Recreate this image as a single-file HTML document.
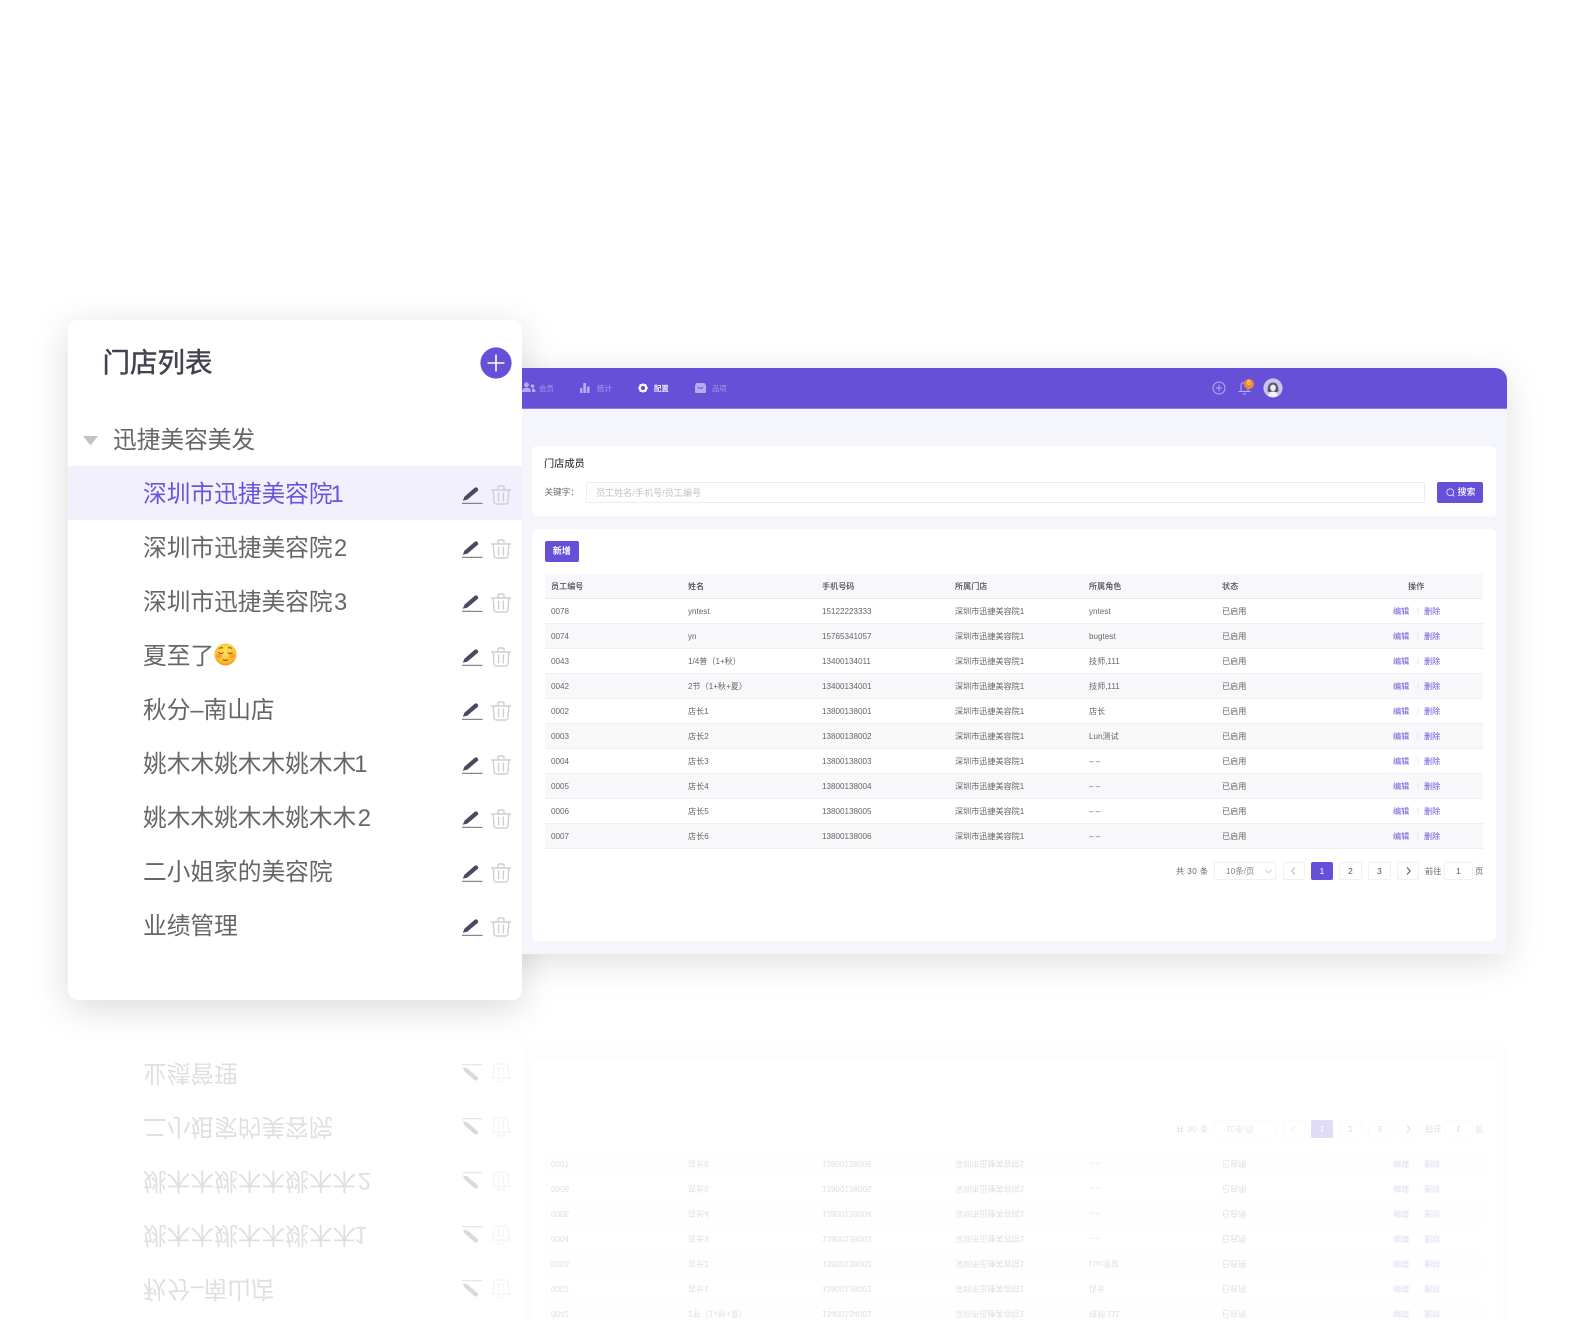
<!DOCTYPE html>
<html lang="zh-CN"><head><meta charset="utf-8"><title>门店列表</title>
<style>
*{box-sizing:border-box;margin:0;padding:0}
html,body{width:1576px;height:1320px;overflow:hidden;background:#fff}
body{position:relative;font-family:"Liberation Sans","Noto Sans CJK SC",sans-serif;color:#666}
.layer{position:absolute;left:0;top:0;width:1576px;height:1000px;filter:blur(.3px)}
.mirror{transform-origin:0 1000px;transform:scaleY(-1);opacity:.2}
.a{position:absolute;white-space:nowrap}
.pshadow{position:absolute;left:68px;top:320px;width:454px;height:680px;border-radius:10px;box-shadow:0 8px 36px rgba(0,0,0,.15)}
.app{position:absolute;left:500px;top:368px;width:1007px;height:586px;background:#f5f6fb;border-radius:0 12px 4px 0;box-shadow:0 8px 36px rgba(0,0,0,.13)}
.mirror .app{box-shadow:none}
.hdr{position:absolute;left:522px;top:368px;width:985px;height:41px;background:#6750d8;border-radius:0 12px 0 0;border-bottom:1px solid #8e7ee4}
.card{position:absolute;background:#fff;border-radius:5px;left:532px;width:964px}
.nav{position:absolute;top:383.5px;font-size:7.4px;line-height:10px;color:#a89cea}
.f{font-size:8.6px;line-height:12px;color:#666}
.box{position:absolute;background:#fff;border:1px solid #f0f0f4;border-radius:2px;text-align:center;font-size:8.4px;color:#555}
.btn{position:absolute;background:#6750d8;border-radius:2px;color:#fff;text-align:center;font-size:8.4px;font-weight:500}
.r{position:absolute;left:544.5px;width:938.5px;height:25.1px;border-bottom:1px solid #eeeef3;font-size:8.1px;line-height:25px;color:#666}
.r.s{background:#f8f8fb}
.mirror .r{border-color:#f6f6f9}
.mirror .r.s{background:#fbfbfd}
.r span{position:absolute;top:0;white-space:nowrap}
.c1{left:6.5px}.c2{left:143.5px}.c3{left:277.5px}.c4{left:410.5px}.c5{left:544.5px}.c6{left:677.5px}
.e{left:848.5px;color:#6a54dc}.x{left:872.5px;color:#d9d9e2;font-size:7px}.d{left:879.5px;color:#6a54dc}
.panel{position:absolute;left:68px;top:320px;width:454px;height:680px;background:#fff;border-radius:10px}
.it{position:absolute;left:143px;font-size:23.7px;line-height:34px;margin-top:1px;color:#666;white-space:nowrap}
.mirror .it{margin-top:2px}
.n1{margin-left:-2px}.n2{margin-left:1.5px}
.ic{position:absolute}
.pen{left:462px}
.tr{left:491px}
</style></head><body>
<svg width="0" height="0" style="position:absolute"><defs>
<g id="pen"><path d="M.8 13.8 L2.4 9.8 L12.4 1 Q14 -.2 15.5 1.1 Q16.8 2.6 15.6 4 L5.4 12.6 Z" fill="#484b5f"/><rect x="0" y="15.8" width="20.5" height="1" fill="#6a6a70"/></g>
<g id="trash" fill="none" stroke="#cfcfd2" stroke-width="1.4"><path d="M0 5H20"/><path d="M7 4.5V2.2Q7 1 8.2 1H11.8Q13 1 13 2.2V4.5"/><path d="M2.2 5.2L3 16.5Q3.2 19 5.6 19H14.4Q16.8 19 17 16.5L17.8 5.2"/><path d="M7.6 7.5V16.5M12.4 7.5V16.5"/></g>
</defs></svg>

<!-- reflection -->
<div class="layer mirror">
<div class="app"></div>
<div class="card" style="top:528px;height:413px"></div>
<div class="r" style="top:648.7px"><span class="c1">0043</span><span class="c2">1/4普（1+秋）</span><span class="c3">13400134011</span><span class="c4">深圳市迅捷美容院1</span><span class="c5">技师,111</span><span class="c6">已启用</span><span class="e">编辑</span><span class="x">|</span><span class="d">删除</span></div>
<div class="r s" style="top:673.8px"><span class="c1">0042</span><span class="c2">2节（1+秋+夏）</span><span class="c3">13400134001</span><span class="c4">深圳市迅捷美容院1</span><span class="c5">技师,111</span><span class="c6">已启用</span><span class="e">编辑</span><span class="x">|</span><span class="d">删除</span></div>
<div class="r" style="top:698.9px"><span class="c1">0002</span><span class="c2">店长1</span><span class="c3">13800138001</span><span class="c4">深圳市迅捷美容院1</span><span class="c5">店长</span><span class="c6">已启用</span><span class="e">编辑</span><span class="x">|</span><span class="d">删除</span></div>
<div class="r s" style="top:724px"><span class="c1">0003</span><span class="c2">店长2</span><span class="c3">13800138002</span><span class="c4">深圳市迅捷美容院1</span><span class="c5">Lun测试</span><span class="c6">已启用</span><span class="e">编辑</span><span class="x">|</span><span class="d">删除</span></div>
<div class="r" style="top:749.1px"><span class="c1">0004</span><span class="c2">店长3</span><span class="c3">13800138003</span><span class="c4">深圳市迅捷美容院1</span><span class="c5">– –</span><span class="c6">已启用</span><span class="e">编辑</span><span class="x">|</span><span class="d">删除</span></div>
<div class="r s" style="top:774.2px"><span class="c1">0005</span><span class="c2">店长4</span><span class="c3">13800138004</span><span class="c4">深圳市迅捷美容院1</span><span class="c5">– –</span><span class="c6">已启用</span><span class="e">编辑</span><span class="x">|</span><span class="d">删除</span></div>
<div class="r" style="top:799.3px"><span class="c1">0006</span><span class="c2">店长5</span><span class="c3">13800138005</span><span class="c4">深圳市迅捷美容院1</span><span class="c5">– –</span><span class="c6">已启用</span><span class="e">编辑</span><span class="x">|</span><span class="d">删除</span></div>
<div class="r s" style="top:824.4px"><span class="c1">0007</span><span class="c2">店长6</span><span class="c3">13800138006</span><span class="c4">深圳市迅捷美容院1</span><span class="c5">– –</span><span class="c6">已启用</span><span class="e">编辑</span><span class="x">|</span><span class="d">删除</span></div>
<div class="a f" style="left:1176px;top:865.5px;font-size:8.2px;letter-spacing:.4px">共 30 条</div>
<div class="box" style="left:1214px;top:862px;width:62px;height:18px;line-height:17px;text-align:left;padding-left:11px;color:#888">10条/页</div>
<div class="box" style="left:1283px;top:862px;width:22px;height:18px"></div>
<svg class="ic" style="left:1291px;top:867px" width="5" height="8" fill="none" stroke="#bbb" stroke-width="1"><path d="M4 .5L.8 4L4 7.5"/></svg>
<div class="btn" style="left:1311px;top:862px;width:22px;height:18px;line-height:18px">1</div>
<div class="box" style="left:1339px;top:862px;width:23px;height:18px;line-height:17px">2</div>
<div class="box" style="left:1368px;top:862px;width:23px;height:18px;line-height:17px">3</div>
<div class="box" style="left:1397px;top:862px;width:22px;height:18px"></div>
<svg class="ic" style="left:1406px;top:867px" width="5" height="8" fill="none" stroke="#555" stroke-width="1"><path d="M1 .5L4.2 4L1 7.5"/></svg>
<div class="a f" style="left:1425px;top:865.5px;font-size:8.2px">前往</div>
<div class="box" style="left:1444px;top:862px;width:29px;height:18px;line-height:17px">1</div>
<div class="a f" style="left:1475px;top:865.5px;font-size:8.2px">页</div>
<div class="panel"></div>
<div class="it" style="top:693px">秋分–南山店</div>
<div class="it" style="top:747px">姚木木姚木木姚木木<span class="n1">1</span></div>
<div class="it" style="top:801px">姚木木姚木木姚木木<span class="n2">2</span></div>
<div class="it" style="top:855px">二小姐家的美容院</div>
<div class="it" style="top:909px">业绩管理</div>
<svg class="ic pen" style="top:703px" width="21" height="18"><use href="#pen"/></svg><svg class="ic tr" style="top:701px" width="20" height="20"><use href="#trash"/></svg>
<svg class="ic pen" style="top:757px" width="21" height="18"><use href="#pen"/></svg><svg class="ic tr" style="top:755px" width="20" height="20"><use href="#trash"/></svg>
<svg class="ic pen" style="top:811px" width="21" height="18"><use href="#pen"/></svg><svg class="ic tr" style="top:809px" width="20" height="20"><use href="#trash"/></svg>
<svg class="ic pen" style="top:865px" width="21" height="18"><use href="#pen"/></svg><svg class="ic tr" style="top:863px" width="20" height="20"><use href="#trash"/></svg>
<svg class="ic pen" style="top:919px" width="21" height="18"><use href="#pen"/></svg><svg class="ic tr" style="top:917px" width="20" height="20"><use href="#trash"/></svg>
</div>

<!-- main -->
<div class="layer">
<div class="pshadow"></div>
<div class="app"></div>
<div class="hdr"></div>

<svg class="ic" style="left:522px;top:382px" width="14" height="11" fill="#b5abee"><circle cx="4.5" cy="2.8" r="2.4"/><path d="M0 10Q0 5.8 4.5 5.8T9 10Z"/><circle cx="10.5" cy="4" r="1.8"/><path d="M10 6.4Q13.5 6.2 13.5 10H10Z"/></svg>
<div class="nav" style="left:539px">会员</div>
<svg class="ic" style="left:580px;top:383px" width="10" height="10" fill="#b5abee"><rect x="0" y="5" width="2.4" height="5"/><rect x="3.3" y="0" width="2.8" height="10"/><rect x="7" y="3.5" width="2.6" height="6.5"/></svg>
<div class="nav" style="left:597px">统计</div>
<svg class="ic" style="left:638px;top:383px" width="10" height="10"><path d="M5 0L6.2 1.3L8.2 1L8.7 3L10 5L8.7 7L8.2 9L6.2 8.7L5 10L3.8 8.7L1.8 9L1.3 7L0 5L1.3 3L1.8 1L3.8 1.3Z" fill="#fff"/><circle cx="5" cy="5" r="2.2" fill="#6750d8"/></svg>
<div class="nav" style="left:654px;color:#efecfc;font-weight:700">配置</div>
<svg class="ic" style="left:695px;top:383px" width="11" height="10"><path d="M1.5 0H9.5L11 2.5V9Q11 10 10 10H1Q0 10 0 9V2.5Z" fill="#b5abee"/><path d="M3 4Q5.5 7 8 4" fill="none" stroke="#6750d8" stroke-width="1"/></svg>
<div class="nav" style="left:712px">品项</div>

<svg class="ic" style="left:1212px;top:381px" width="14" height="14" fill="none" stroke="#b9afef" stroke-width="1"><circle cx="7" cy="7" r="6"/><path d="M7 3.8V10.2M3.8 7H10.2"/></svg>
<svg class="ic" style="left:1238px;top:381px" width="14" height="14" fill="none" stroke="#b9afef" stroke-width="1"><path d="M3 10V5.5Q3 1.5 6.5 1.5T10 5.5V10"/><path d="M.5 10.5H12.5M5 13H8"/></svg>
<div class="a" style="left:1244px;top:379px;width:10px;height:10px;border-radius:50%;background:#f5862b;color:#ffe3c6;font-size:7px;line-height:10px;text-align:center">6</div>
<svg class="ic" style="left:1263px;top:378px" width="20" height="20"><circle cx="10" cy="10" r="9.6" fill="#c9c3ef"/><path d="M4.5 13Q4.5 4.5 10 4.5T15.5 13Q14.5 14.5 13 14H7Q5.5 14.5 4.5 13Z" fill="#5c5a72"/><ellipse cx="10" cy="9.8" rx="2.8" ry="3.2" fill="#f4e9e6"/><path d="M5 17.5Q6.5 13.5 10 13.5T15 17.5Q10 20.5 5 17.5Z" fill="#f6f4fb"/></svg>

<div class="card" style="top:446px;height:70px"></div>
<div class="a" style="left:544px;top:457.8px;font-size:10.2px;line-height:14px;color:#3f3f4a;font-weight:500">门店成员</div>
<div class="a f" style="left:544.5px;top:486px">关键字：</div>
<div class="a" style="left:586px;top:482px;width:839px;height:21px;border:1px solid #ececf2;border-radius:2px;background:#fff"></div>
<div class="a f" style="left:596px;top:486.5px;color:#c2c2ca;font-size:9.1px">员工姓名/手机号/员工编号</div>
<div class="btn" style="left:1437px;top:482px;width:46px;height:21px;line-height:21px;padding-left:13px;font-size:9px">搜索</div>
<svg class="ic" style="left:1446px;top:488px" width="9" height="9" fill="none" stroke="#e7e3fa" stroke-width=".9"><circle cx="4.2" cy="4.2" r="3.4"/><path d="M6.7 6.7L8.4 8.4"/></svg>

<div class="card" style="top:528.5px;height:412.5px"></div>
<div class="btn" style="left:544.5px;top:541px;width:34.5px;height:21px;line-height:21px;font-size:9px;font-weight:700">新增</div>

<div class="r" style="top:574px;height:24.5px;background:#f8f8fb;border-bottom:1px solid #e9e9f0;font-weight:500;color:#4a4a55"><span class="c1">员工编号</span><span class="c2">姓名</span><span class="c3">手机号码</span><span class="c4">所属门店</span><span class="c5">所属角色</span><span class="c6">状态</span><span style="left:863.5px">操作</span></div>
<div class="r" style="top:598.5px"><span class="c1">0078</span><span class="c2">yntest</span><span class="c3">15122223333</span><span class="c4">深圳市迅捷美容院1</span><span class="c5">yntest</span><span class="c6">已启用</span><span class="e">编辑</span><span class="x">|</span><span class="d">删除</span></div>
<div class="r s" style="top:623.6px"><span class="c1">0074</span><span class="c2">yn</span><span class="c3">15765341057</span><span class="c4">深圳市迅捷美容院1</span><span class="c5">bugtest</span><span class="c6">已启用</span><span class="e">编辑</span><span class="x">|</span><span class="d">删除</span></div>
<div class="r" style="top:648.7px"><span class="c1">0043</span><span class="c2">1/4普（1+秋）</span><span class="c3">13400134011</span><span class="c4">深圳市迅捷美容院1</span><span class="c5">技师,111</span><span class="c6">已启用</span><span class="e">编辑</span><span class="x">|</span><span class="d">删除</span></div>
<div class="r s" style="top:673.8px"><span class="c1">0042</span><span class="c2">2节（1+秋+夏）</span><span class="c3">13400134001</span><span class="c4">深圳市迅捷美容院1</span><span class="c5">技师,111</span><span class="c6">已启用</span><span class="e">编辑</span><span class="x">|</span><span class="d">删除</span></div>
<div class="r" style="top:698.9px"><span class="c1">0002</span><span class="c2">店长1</span><span class="c3">13800138001</span><span class="c4">深圳市迅捷美容院1</span><span class="c5">店长</span><span class="c6">已启用</span><span class="e">编辑</span><span class="x">|</span><span class="d">删除</span></div>
<div class="r s" style="top:724px"><span class="c1">0003</span><span class="c2">店长2</span><span class="c3">13800138002</span><span class="c4">深圳市迅捷美容院1</span><span class="c5">Lun测试</span><span class="c6">已启用</span><span class="e">编辑</span><span class="x">|</span><span class="d">删除</span></div>
<div class="r" style="top:749.1px"><span class="c1">0004</span><span class="c2">店长3</span><span class="c3">13800138003</span><span class="c4">深圳市迅捷美容院1</span><span class="c5">– –</span><span class="c6">已启用</span><span class="e">编辑</span><span class="x">|</span><span class="d">删除</span></div>
<div class="r s" style="top:774.2px"><span class="c1">0005</span><span class="c2">店长4</span><span class="c3">13800138004</span><span class="c4">深圳市迅捷美容院1</span><span class="c5">– –</span><span class="c6">已启用</span><span class="e">编辑</span><span class="x">|</span><span class="d">删除</span></div>
<div class="r" style="top:799.3px"><span class="c1">0006</span><span class="c2">店长5</span><span class="c3">13800138005</span><span class="c4">深圳市迅捷美容院1</span><span class="c5">– –</span><span class="c6">已启用</span><span class="e">编辑</span><span class="x">|</span><span class="d">删除</span></div>
<div class="r s" style="top:824.4px"><span class="c1">0007</span><span class="c2">店长6</span><span class="c3">13800138006</span><span class="c4">深圳市迅捷美容院1</span><span class="c5">– –</span><span class="c6">已启用</span><span class="e">编辑</span><span class="x">|</span><span class="d">删除</span></div>

<div class="a f" style="left:1176px;top:865.5px;font-size:8.2px;letter-spacing:.4px">共 30 条</div>
<div class="box" style="left:1214px;top:862px;width:62px;height:18px;line-height:17px;text-align:left;padding-left:11px;color:#888">10条/页</div>
<svg class="ic" style="left:1265px;top:869px" width="7" height="5" fill="none" stroke="#c8c8cf" stroke-width=".8"><path d="M.5 .8L3.5 3.8L6.5 .8"/></svg>
<div class="box" style="left:1283px;top:862px;width:22px;height:18px"></div>
<svg class="ic" style="left:1291px;top:867px" width="5" height="8" fill="none" stroke="#bbb" stroke-width="1"><path d="M4 .5L.8 4L4 7.5"/></svg>
<div class="btn" style="left:1311px;top:862px;width:22px;height:18px;line-height:18px">1</div>
<div class="box" style="left:1339px;top:862px;width:23px;height:18px;line-height:17px">2</div>
<div class="box" style="left:1368px;top:862px;width:23px;height:18px;line-height:17px">3</div>
<div class="box" style="left:1397px;top:862px;width:22px;height:18px"></div>
<svg class="ic" style="left:1406px;top:867px" width="5" height="8" fill="none" stroke="#555" stroke-width="1"><path d="M1 .5L4.2 4L1 7.5"/></svg>
<div class="a f" style="left:1425px;top:865.5px;font-size:8.2px">前往</div>
<div class="box" style="left:1444px;top:862px;width:29px;height:18px;line-height:17px">1</div>
<div class="a f" style="left:1475px;top:865.5px;font-size:8.2px">页</div>

<div class="panel"></div>
<div class="a" style="left:102.5px;top:343px;font-size:27.5px;line-height:40px;font-weight:400;-webkit-text-stroke:.45px #41414f;color:#41414f">门店列表</div>
<svg class="ic" style="left:480px;top:347px" width="32" height="32"><circle cx="16" cy="16" r="15.6" fill="#6750d8"/><path d="M16 7.5V24.5M7.5 16H24.5" stroke="#fff" stroke-width="1.6"/></svg>
<svg class="ic" style="left:83px;top:435.5px" width="15" height="10"><path d="M0 0H15L7.5 9.5Z" fill="#c4c4c6"/></svg>
<div class="a" style="left:113px;top:423.5px;font-size:23.7px;line-height:34px;color:#666">迅捷美容美发</div>
<div class="a" style="left:68px;top:466px;width:454px;height:54px;background:#f2f0fc"></div>

<div class="it" style="top:477px;color:#6a54dc">深圳市迅捷美容院<span class="n1">1</span></div>
<div class="it" style="top:531px">深圳市迅捷美容院<span class="n2">2</span></div>
<div class="it" style="top:585px">深圳市迅捷美容院<span class="n2">3</span></div>
<div class="it" style="top:639px">夏至了</div>
<svg class="ic" style="left:214px;top:642.5px" width="23" height="23"><defs><radialGradient id="em" cx=".5" cy=".35" r=".7"><stop offset="0" stop-color="#ffe45a"/><stop offset=".7" stop-color="#fcbc2c"/><stop offset="1" stop-color="#f08a1c"/></radialGradient></defs><circle cx="11.5" cy="11.5" r="11" fill="url(#em)"/><ellipse cx="5" cy="13" rx="3" ry="2" fill="#f7823c" opacity=".6"/><ellipse cx="18" cy="13" rx="3" ry="2" fill="#f7823c" opacity=".6"/><path d="M4.5 9.5Q7 11.5 9.5 9.5M13.5 9.5Q16 11.5 18.5 9.5M5 5.5Q7 4.3 9 5M14 5Q16 4.3 18 5.5M9 16.5Q11.5 18.5 14 16.5" fill="none" stroke="#8a4b12" stroke-width="1"/></svg>
<div class="it" style="top:693px">秋分–南山店</div>
<div class="it" style="top:747px">姚木木姚木木姚木木<span class="n1">1</span></div>
<div class="it" style="top:801px">姚木木姚木木姚木木<span class="n2">2</span></div>
<div class="it" style="top:855px">二小姐家的美容院</div>
<div class="it" style="top:909px">业绩管理</div>

<svg class="ic pen" style="top:487px" width="21" height="18"><use href="#pen"/></svg><svg class="ic tr" style="top:485px" width="20" height="20"><use href="#trash"/></svg>
<svg class="ic pen" style="top:541px" width="21" height="18"><use href="#pen"/></svg><svg class="ic tr" style="top:539px" width="20" height="20"><use href="#trash"/></svg>
<svg class="ic pen" style="top:595px" width="21" height="18"><use href="#pen"/></svg><svg class="ic tr" style="top:593px" width="20" height="20"><use href="#trash"/></svg>
<svg class="ic pen" style="top:649px" width="21" height="18"><use href="#pen"/></svg><svg class="ic tr" style="top:647px" width="20" height="20"><use href="#trash"/></svg>
<svg class="ic pen" style="top:703px" width="21" height="18"><use href="#pen"/></svg><svg class="ic tr" style="top:701px" width="20" height="20"><use href="#trash"/></svg>
<svg class="ic pen" style="top:757px" width="21" height="18"><use href="#pen"/></svg><svg class="ic tr" style="top:755px" width="20" height="20"><use href="#trash"/></svg>
<svg class="ic pen" style="top:811px" width="21" height="18"><use href="#pen"/></svg><svg class="ic tr" style="top:809px" width="20" height="20"><use href="#trash"/></svg>
<svg class="ic pen" style="top:865px" width="21" height="18"><use href="#pen"/></svg><svg class="ic tr" style="top:863px" width="20" height="20"><use href="#trash"/></svg>
<svg class="ic pen" style="top:919px" width="21" height="18"><use href="#pen"/></svg><svg class="ic tr" style="top:917px" width="20" height="20"><use href="#trash"/></svg>
</div>
</body></html>
